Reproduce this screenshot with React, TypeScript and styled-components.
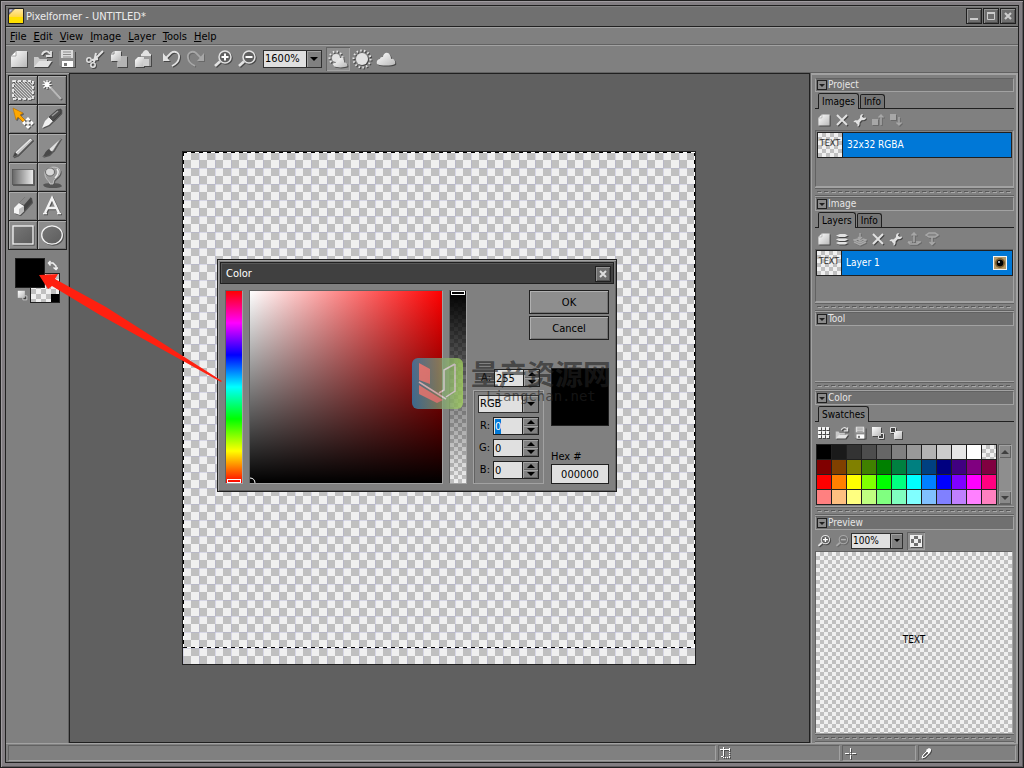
import React, { useEffect, useRef } from "react";
import styled, { createGlobalStyle, css } from "styled-components";

const c = {
  face: "#808080",
  light: "#a2a2a2",
  shade: "#626262",
  ink: "#202020",
  title: "#707070",
  work: "#606060",
  field: "#e0e0e0",
  blue: "#0078d7",
};

const font = `Tahoma, "DejaVu Sans Condensed", "DejaVu Sans", sans-serif`;

const checker = (cell: number) =>
  `repeating-conic-gradient(#c0c0c0 0 25%, #f0f0f0 0 50%) 0 0 / ${cell * 2}px ${cell * 2}px`;

const Global = createGlobalStyle`
  * { box-sizing: border-box; }
  body { margin: 0; background: ${c.ink}; font: 11px/14px ${font}; color: #000; }
  button, input, select { font: inherit; color: inherit; margin: 0; padding: 0; border: 0; border-radius: 0; background: none; outline: 0; }
  svg { display: block; flex: none; }
  ::selection { background: ${c.blue}; color: #fff; }
`;

const Frame = styled.div`
  position: relative;
  display: flex;
  min-height: 100vh;
  border: 1px solid ${c.ink};
  padding: 4px;
  background: #827e82;
  box-shadow: inset 1px 1px 0 #a09ca0, inset -1px -1px 0 #5e5a5e;
`;

const AppWindow = styled.div`
  flex: 1;
  min-width: 0;
  display: flex;
  flex-direction: column;
  border: 1px solid ${c.ink};
  background: ${c.face};
`;

const TitleBar = styled.header`
  display: flex;
  align-items: center;
  gap: 2px;
  height: 21px;
  padding: 0 2px;
  background: ${c.title};
  border-bottom: 1px solid ${c.ink};
  box-shadow: inset 0 1px 0 #848484;
  color: #ececec;
`;

const AppTitle = styled.h1`
  flex: 1;
  margin: 0;
  padding-top: 1px;
  font: inherit;
`;

const WindowButtons = styled.div`
  display: flex;
  gap: 1px;
`;

const FrameButton = styled.button`
  display: grid;
  place-items: center;
  width: 16px;
  height: 16px;
  border: 1px solid ${c.ink};
  background: #6e6e6e;
  box-shadow: inset 1px 1px 0 #929292, inset -1px -1px 0 #505050;
`;

const MenuBar = styled.nav`
  display: flex;
  gap: 7px;
  height: 18px;
  padding: 0 4px;
  border-top: 1px solid ${c.light};
  border-bottom: 1px solid ${c.shade};
`;

const MenuItem = styled.button`
  line-height: 18px;
  u { text-underline-offset: 1px; }
`;

const Toolbar = styled.div`
  display: flex;
  align-items: center;
  height: 28px;
  padding: 0 1px;
  border-top: 1px solid ${c.light};
  border-bottom: 1px solid ${c.shade};
`;

const Group = styled.div`
  display: flex;
  align-items: center;
  margin-right: 4px;
`;

const IconButton = styled.button<{ $size?: number; $on?: boolean; $off?: boolean }>`
  display: grid;
  place-items: center;
  width: ${(p) => p.$size ?? 24}px;
  height: ${(p) => p.$size ?? 24}px;
  svg {
    opacity: ${(p) => (p.$off ? 0.4 : 1)};
    filter: drop-shadow(1px 1px 0 rgba(0, 0, 0, 0.45));
  }
  ${(p) =>
    p.$on &&
    css`
      background: #8e8e8e;
      box-shadow: inset 1px 1px 0 ${c.shade}, inset -1px -1px 0 ${c.light};
    `}
`;

const ComboBox = styled.label<{ $w: number; $h: number }>`
  display: flex;
  width: ${(p) => p.$w}px;
  height: ${(p) => p.$h}px;
  border: 1px solid #303030;
  background: ${c.field};
  select {
    flex: 1;
    min-width: 0;
    padding-left: 1px;
    appearance: none;
  }
`;

const ComboArrow = styled.span<{ $w: number }>`
  display: grid;
  place-items: center;
  width: ${(p) => p.$w}px;
  border-left: 1px solid ${c.ink};
  background: ${c.face};
  box-shadow: inset 1px 1px 0 ${c.light};
`;

const Main = styled.main`
  flex: 1;
  display: flex;
  min-height: 0;
`;

const ToolPanel = styled.aside`
  display: flex;
  flex-direction: column;
  width: 64px;
  padding: 2px;
  border-right: 1px solid ${c.ink};
  box-shadow: inset 0 1px 0 ${c.light}, inset -1px 0 0 ${c.shade};
`;

const ToolGrid = styled.div`
  display: grid;
  grid-template-columns: repeat(2, 28px);
  grid-auto-rows: 28px;
  gap: 1px;
  align-self: flex-start;
  padding: 1px;
  background: ${c.ink};
`;

const ToolButton = styled.button<{ $on?: boolean }>`
  display: grid;
  place-items: center;
  background: ${(p) => (p.$on ? "#989898" : "#8c8c8c")};
  box-shadow: inset 1px 1px 0 #acacac, inset -1px -1px 0 #747474;
  svg { filter: drop-shadow(1px 1px 0 rgba(0, 0, 0, 0.4)); }
`;

const ColorPair = styled.div`
  display: grid;
  grid-template-columns: 15px 15px 15px;
  grid-template-rows: 15px 15px 15px;
  isolation: isolate;
  margin: 8px 7px;
`;

const ForeColor = styled.button`
  grid-area: 1 / 1 / 3 / 3;
  z-index: 1;
  border: 1px solid ${c.ink};
  background: #000;
`;

const BackColor = styled.button`
  grid-area: 2 / 2 / 4 / 4;
  border: 1px solid ${c.ink};
  background: linear-gradient(#000, #000) 100% 100% / 8px 8px no-repeat, ${checker(5)};
`;

const SwapSlot = styled.button`
  grid-area: 1 / 3;
  display: grid;
  place-items: center;
`;

const ResetSlot = styled.button`
  grid-area: 3 / 1;
  display: grid;
  place-items: center;
`;

const Workspace = styled.section`
  flex: 1;
  min-width: 0;
  display: grid;
  place-items: center;
  padding-right: 2px;
  border-top: 1px solid ${c.ink};
  border-bottom: 1px solid ${c.ink};
  background: ${c.work};
`;

const Canvas = styled.div`
  width: 514px;
  height: 514px;
  border: 1px solid ${c.ink};
  background: repeating-linear-gradient(90deg, rgba(170, 170, 210, 0.35) 0 1px, transparent 1px 16px),
    repeating-linear-gradient(rgba(170, 170, 210, 0.35) 0 1px, transparent 1px 16px), ${checker(8)};
`;

const antsX = "repeating-linear-gradient(90deg, #000 0 4px, #fff 4px 8px)";
const antsY = "repeating-linear-gradient(#000 0 4px, #fff 4px 8px)";

const Selection = styled.div`
  height: 496px;
  background: ${antsX} 0 0 / 100% 1px no-repeat, ${antsX} 0 100% / 100% 1px no-repeat,
    ${antsY} 0 0 / 1px 100% no-repeat, ${antsY} 100% 0 / 1px 100% no-repeat;
`;

const SidePanel = styled.aside`
  display: flex;
  flex-direction: column;
  width: 209px;
  padding: 5px 4px 0 5px;
  border-left: 1px solid ${c.ink};
  font-size: 10px;
  line-height: 12px;
  box-shadow: inset 1px 0 0 ${c.shade}, inset 3px 3px 0 -1px ${c.light}, inset -3px 0 0 -1px ${c.light},
    inset -1px 0 0 ${c.shade};
`;

const Section = styled.section<{ $h?: number }>`
  display: flex;
  flex-direction: column;
  ${(p) => (p.$h ? `height: ${p.$h}px;` : "flex: 1;")}
`;

const SectionHead = styled.h2`
  display: flex;
  align-items: center;
  gap: 1px;
  height: 14px;
  margin: 0;
  padding-left: 1px;
  border: 1px solid ${c.light};
  border-top-color: ${c.shade};
  background: ${c.title};
  color: #e6e6e6;
  font: inherit;
`;

const Fold = styled.button`
  display: grid;
  place-items: center;
  width: 10px;
  height: 10px;
  border: 1px solid ${c.ink};
  background: #8a8a8a;
`;

const Grip = styled.div`
  height: 10px;
  border-top: 1px solid ${c.light};
  border-bottom: 1px solid ${c.light};
  background: repeating-linear-gradient(90deg, #585858 0 4px, transparent 4px 7px) 2px 3px / 196px 1px no-repeat,
    repeating-linear-gradient(90deg, #a8a8a8 0 4px, transparent 4px 7px) 3px 4px / 195px 1px no-repeat;
  box-shadow: inset 0 1px 0 ${c.shade}, inset 0 -1px 0 ${c.shade};
`;

const Tabs = styled.div`
  display: flex;
  align-items: flex-end;
  gap: 1px;
  height: 17px;
  padding-left: 3px;
  border-bottom: 1px solid ${c.ink};
`;

const Tab = styled.button<{ $on?: boolean }>`
  height: ${(p) => (p.$on ? 16 : 14)}px;
  margin-bottom: ${(p) => (p.$on ? -1 : 0)}px;
  padding: 0 3px;
  border: 1px solid ${c.ink};
  border-bottom: 0;
  border-radius: 2px 3px 0 0;
  background: ${(p) => (p.$on ? c.face : "#757575")};
  line-height: 13px;
`;

const MiniBar = styled.div`
  display: flex;
  align-items: center;
  height: 21px;
`;

const ListBox = styled.div`
  flex: 1;
  border: 1px solid ${c.shade};
  border-right-color: ${c.light};
  border-bottom-color: ${c.light};
`;

const ListRow = styled.div<{ $inset?: boolean }>`
  display: flex;
  align-items: center;
  height: 26px;
  margin: ${(p) => (p.$inset ? "1px 1px 0" : "0")};
  padding-right: 5px;
  border: 1px solid ${c.ink};
  background: ${c.blue};
  color: #fff;
`;

const Thumb = styled.span`
  width: 25px;
  height: 24px;
  margin-right: 4px;
  border-right: 1px solid ${c.ink};
  background: ${checker(4)};
  color: #333;
  font-size: 9px;
  line-height: 20px;
  text-align: center;
`;

const RowName = styled.span`
  flex: 1;
`;

const EyeButton = styled.button`
  display: grid;
  place-items: center;
  width: 14px;
  height: 14px;
  border: 1px solid #f4f4f4;
  background: #b59a6a;
`;

const SwatchArea = styled.div`
  display: flex;
  padding: 1px 2px 0 1px;
`;

const SwatchGrid = styled.div`
  display: grid;
  grid-template-columns: repeat(12, 14px);
  grid-auto-rows: 14px;
  gap: 1px;
  padding: 1px;
  background: ${c.ink};
`;

const Swatch = styled.button<{ $c: string }>`
  background: ${(p) => p.$c};
`;

const Scroll = styled.div`
  display: flex;
  flex-direction: column;
  justify-content: space-between;
  width: 14px;
  margin-left: 1px;
  background: #8e8e8e;
  border: 1px solid ${c.shade};
  border-right-color: ${c.light};
`;

const ScrollButton = styled.button`
  display: grid;
  place-items: center;
  height: 13px;
  background: #8a8a8a;
  box-shadow: inset 1px 1px 0 ${c.light}, inset -1px -1px 0 ${c.shade};
`;

const PreviewArea = styled.div`
  flex: 1;
  display: grid;
  place-items: center;
  margin: 0 1px 0 0;
  padding-bottom: 5px;
  border: 1px solid ${c.shade};
  border-bottom: 0;
  border-right-color: ${c.light};
  background: ${checker(4)};
`;

const StatusBar = styled.footer`
  display: flex;
  gap: 2px;
  height: 19px;
  padding: 1px 2px;
  border-top: 1px solid ${c.light};
`;

const StatusCell = styled.div<{ $w?: number }>`
  ${(p) => (p.$w ? `width: ${p.$w}px;` : "flex: 1;")}
  padding: 1px;
  border: 1px solid ${c.shade};
  border-right-color: ${c.light};
  border-bottom-color: ${c.light};
  svg { filter: drop-shadow(1px 1px 0 rgba(0, 0, 0, 0.4)); }
`;

const Dialog = styled.div`
  position: absolute;
  left: 216px;
  top: 258px;
  width: 400px;
  padding: 2px;
  border: 1px solid ${c.ink};
  background: ${c.face};
  box-shadow: inset 1px 1px 0 ${c.light}, inset -1px -1px 0 ${c.shade};
`;

const DialogTitle = styled.div`
  display: flex;
  align-items: center;
  justify-content: space-between;
  height: 22px;
  padding: 1px 2px 0 5px;
  border: 1px solid ${c.ink};
  background: #404040;
  box-shadow: inset 1px 1px 0 #585858;
  color: #fff;
`;

const DialogBody = styled.form`
  display: flex;
  gap: 6px;
  padding: 6px 5px 5px;
`;

const sunken = css`
  border: 1px solid ${c.shade};
  border-right-color: ${c.light};
  border-bottom-color: ${c.light};
`;

const VSlider = styled.input<{ $bg: string }>`
  ${sunken}
  appearance: none;
  writing-mode: vertical-lr;
  direction: rtl;
  width: 18px;
  height: 194px;
  background: ${(p) => p.$bg};
  &::-webkit-slider-thumb {
    appearance: none;
    width: 14px;
    height: 4px;
    border: 1px solid #fff;
    background: transparent;
  }
`;

const ShadeField = styled.div`
  ${sunken}
  display: flex;
  align-items: flex-end;
  width: 194px;
  height: 194px;
  background: linear-gradient(to top, #000, transparent), linear-gradient(to right, #fff, #f00);
`;

const Controls = styled.div`
  flex: 1;
  display: flex;
  flex-direction: column;
  justify-content: space-between;
`;

const DialogButtons = styled.div`
  display: flex;
  flex-direction: column;
  align-items: flex-end;
  gap: 2px;
`;

const PushButton = styled.button`
  width: 80px;
  height: 24px;
  padding-top: 1px;
  border: 1px solid ${c.ink};
  background: #8e8e8e;
  box-shadow: inset 1px 1px 0 #b0b0b0, inset -1px -1px 0 #727272;
`;

const Values = styled.div`
  display: flex;
  justify-content: space-between;
  height: 116px;
`;

const ChannelColumn = styled.div`
  display: flex;
  flex-direction: column;
  justify-content: space-between;
  width: 71px;
`;

const ChannelBox = styled.div`
  display: flex;
  flex-direction: column;
  gap: 4px;
  padding: 4px;
  border: 1px solid ${c.light};
  box-shadow: inset 1px 1px 0 ${c.shade};
`;

const SpinRow = styled.label<{ $outer?: boolean }>`
  display: flex;
  align-items: center;
  justify-content: flex-end;
  gap: 3px;
  height: 18px;
  margin: ${(p) => (p.$outer ? "1px 4px 0 0" : "0")};
  line-height: 16px;
`;

const Spin = styled.span`
  display: flex;
  width: 46px;
  height: 18px;
  border: 1px solid ${c.ink};
  background: ${c.field};
  input {
    flex: 1;
    min-width: 0;
    padding: 1px 0 0 1px;
  }
`;

const SpinButtons = styled.span`
  display: grid;
  grid-template-rows: 1fr 1fr;
  width: 16px;
  border-left: 1px solid ${c.ink};
  button {
    display: grid;
    place-items: center;
    background: ${c.face};
    box-shadow: inset 1px 1px 0 ${c.light}, inset -1px -1px 0 ${c.shade};
  }
`;

const ResultColumn = styled.div`
  display: flex;
  flex-direction: column;
  justify-content: space-between;
  width: 58px;
`;

const ResultColor = styled.div`
  height: 58px;
  border: 1px solid ${c.ink};
  background: #000;
`;

const HexField = styled.label`
  display: flex;
  flex-direction: column;
  input {
    width: 100%;
    height: 20px;
    border: 1px solid ${c.ink};
    background: ${c.field};
    text-align: center;
  }
`;

const Watermark = styled.div`
  position: absolute;
  left: 411px;
  top: 357px;
  display: flex;
  gap: 8px;
  color: rgba(32, 32, 32, 0.62);
  pointer-events: none;
`;

const MarkText = styled.div`
  font: 700 28px/31px "Noto Sans CJK SC", sans-serif;
  text-align: center;
  small {
    display: block;
    font: 14px/14px "DejaVu Sans Mono", monospace;
  }
`;

const ArrowLayer = styled.svg`
  position: absolute;
  left: 33px;
  top: 263px;
  pointer-events: none;
`;

/* ---------- drawings ---------- */

const L = "#e2e2e2";

const Down = ({ s = 4, fill = "#000" }: { s?: number; fill?: string }) => (
  <svg width={s * 2} height={s} viewBox={`0 0 ${s * 2} ${s}`}><path d={`M0 0H${s * 2}L${s} ${s}Z`} fill={fill} /></svg>
);
const Up = ({ s = 4, fill = "#000" }: { s?: number; fill?: string }) => (
  <svg width={s * 2} height={s} viewBox={`0 0 ${s * 2} ${s}`}><path d={`M0 ${s}H${s * 2}L${s} 0Z`} fill={fill} /></svg>
);

const Svg = ({ s = 20, v = 20, children }: { s?: number; v?: number; children: React.ReactNode }) => (
  <svg width={s} height={s} viewBox={`0 0 ${v} ${v}`} fill="none">{children}</svg>
);

const DefsSvg = styled.svg`
  position: absolute;
`;

const Defs = () => (
  <DefsSvg width="0" height="0" aria-hidden="true">
    <defs>
      <linearGradient id="paper" x1="0" y1="0" x2="1" y2="1"><stop offset="0" stopColor="#fff" /><stop offset="1" stopColor="#b8b8b8" /></linearGradient>
      <linearGradient id="fade"><stop offset="0" stopColor="#666" /><stop offset="1" stopColor="#eee" /></linearGradient>
      <linearGradient id="dim" x1="0" y1="0" x2="1" y2="1"><stop offset="0" stopColor="#777" /><stop offset="1" stopColor="#5c5c5c" /></linearGradient>
      <linearGradient id="gold" x1="0" y1="0" x2="0" y2="1"><stop offset="0" stopColor="#ffe9a8" /><stop offset="1" stopColor="#ffc800" /></linearGradient>
      <linearGradient id="mark"><stop offset="0" stopColor="#2f86b8" /><stop offset=".5" stopColor="#7a9a78" /><stop offset="1" stopColor="#a5d65c" /></linearGradient>
      <pattern id="hatch" width="3" height="3" patternUnits="userSpaceOnUse"><path d="M0 0L3 3" stroke="#d0d0d0" /></pattern>
    </defs>
  </DefsSvg>
);

const Page = ({ s = 20 }: { s?: number }) => <Svg s={s}><path d="M7 2H18V18H2V7Z" fill="url(#paper)" /><path d="M7 2V7H2Z" fill="#fff" stroke="#909090" strokeWidth=".8" /></Svg>;
const Open = ({ s = 20 }: { s?: number }) => (
  <Svg s={s}><path d="M1 18V8H5L7 10H14V12H7L2 18Z" fill="#c8c8c8" /><path d="M6 12H19L15 18H1Z" fill={L} /><path d="M9 6C10 2 15 1 17 5M18 2V7H13" stroke={L} strokeWidth="1.8" /></Svg>
);
const Save = ({ s = 20 }: { s?: number }) => (
  <Svg s={s}><path d="M2 2H18V18H4L2 16Z" fill="#8c8c8c" /><path d="M4 1H16V9H4Z" fill="#dcdcdc" /><path d="M6 3H14M6 5.500H14M6 8H14" stroke="#8a8a8a" /><path d="M5 12H16V18H5Z" fill="#fff" /><path d="M7 14H10V17H7Z" fill="#777" /></Svg>
);
const Cut = () => <Svg><path d="M18 2L8 12M13 10L7 11M11 4L9 13" stroke={L} strokeWidth="2" /><circle cx="4" cy="11" r="2.200" stroke={L} strokeWidth="1.500" /><circle cx="8" cy="16" r="2.200" stroke={L} strokeWidth="1.500" /></Svg>;
const Copy = () => <Svg><path d="M10 7H18V18H8V14Z" fill="#b4b4b4" /><path d="M5 2H12V12H2V5Z" fill="url(#paper)" /><path d="M5 2V5H2" stroke="#888" /></Svg>;
const Paste = () => <Svg><path d="M8 5H18V17H8Z" fill="#9a9a9a" /><path d="M8 5C10 5 10 1 13 1S16 5 18 5V7H8Z" fill={L} /><path d="M5 8H11V18H2V11Z" fill="url(#paper)" /><path d="M10 10H16V17H10Z" fill="#d0d0d0" /></Svg>;
const Undo = () => <Svg><path d="M4 10L10 4C14 1 19 4 18 9C17.500 13 15 15 11 17" stroke={L} strokeWidth="1.800" /><path d="M2 4V12H9Z" fill={L} /></Svg>;
const Redo = () => <Svg><path d="M17 10L11 4C7 1 2 4 3 9C3.500 13 6 15 10 17" stroke={L} strokeWidth="1.800" /><path d="M19 4V12H12Z" fill={L} /></Svg>;
const Zoom = ({ s = 20, plus }: { s?: number; plus?: boolean }) => (
  <Svg s={s}><path d="M2 17L7 12.500" stroke={L} strokeWidth="2.600" /><circle cx="12" cy="8" r="6" fill="#606060" stroke={L} strokeWidth="1.500" /><path d={plus ? "M8.500 8H15.500M12 4.500V11.500" : "M8.500 8H15.500"} stroke="#fff" strokeWidth="2" /></Svg>
);
const Sun = ({ x = 10, y = 10, r = 6 }: { x?: number; y?: number; r?: number }) => (
  <g><circle cx={x} cy={y} r={r} fill={L} /><circle cx={x} cy={y} r={r + 2.5} stroke={L} strokeWidth="2" strokeDasharray="1.500 2.300" /></g>
);
const Cloud = () => <path d="M1 15C0 12 2 10 4 10C4 8 6 8 7 8C7 4 12 2 14 6C15 8 15 9 15 10C18 9 20 13 19 15C15 17 5 17 1 15Z" fill="url(#paper)" />;
const Cross = () => <Svg s={14} v={14}><path d="M2 2L12 12M12 2L2 12" stroke={L} strokeWidth="2" /></Svg>;
const Wrench = () => <Svg s={14} v={14}><path d="M3.500 10.500L9 5" stroke={L} strokeWidth="2.600" /><path d="M10 1C7 1 6.500 4 7.500 6.500C10 8 13 7 13 4.500L10.500 5L9 3.500ZM0.500 9L3 9.500L4.500 11L4.500 13.500C7 13 7 10 6 8C4 7 1 7 .5 9Z" fill={L} /></Svg>;
const MoveImg = ({ up }: { up?: boolean }) => (
  <Svg s={14} v={14}>{up ? <><path d="M1 6H7V12H1Z" fill={L} /><path d="M10 12V2M7.500 4.500L10 2L12.500 4.500" stroke={L} strokeWidth="1.500" /></> : <><path d="M1 1H7V7H1Z" fill={L} /><path d="M10 4V12M7.500 9.500L10 12L12.500 9.500" stroke={L} strokeWidth="1.500" /></>}</Svg>
);
const Stack = () => <Svg s={14} v={14}><path d="M1 3.500L5 2H10L13 3.500L10 5H4ZM1 7.500L3 6.500H11L13 7.500L10 9H4ZM1 11L3 10H11L13 11L10 12.500H4Z" fill={L} /></Svg>;
const LayerMove = ({ k }: { k: "merge" | "up" | "down" }) => (
  <Svg s={14} v={14}>
    {k === "merge" && <path d="M7 1V7M5 5L7 7L9 5M1 8L5 7L7 9L10 7L13 8L7 11ZM1 10L7 13L13 10" stroke={L} strokeWidth="1.400" />}
    {k === "up" && <path d="M7 10V1M4.500 3.500L7 1L9.500 3.500M1 10H5M9 10H13L10 12H3L1 10" stroke={L} strokeWidth="1.500" />}
    {k === "down" && <path d="M1 3L4 1H10L13 3L10 5H4ZM7 5V12M4.500 10L7 12.500L9.500 10" stroke={L} strokeWidth="1.500" fill={L} fillOpacity=".4" />}
  </Svg>
);
const GridDots = () => <Svg s={14} v={14}><path d="M1 1H4V4H1ZM5 1H8V4H5ZM9 1H12V4H9ZM1 5H4V8H1ZM5 5H8V8H5ZM9 5H12V8H9ZM1 9H4V12H1ZM5 9H8V12H5ZM9 9H12V12H9Z" fill="#f4f4f4" /></Svg>;
const Overlap = ({ back, s = 14 }: { back?: boolean; s?: number }) => (
  <Svg s={s} v={14}>{back ? <><path d="M5 5H13V13H5Z" fill="url(#paper)" /><path d="M1.500 1.500H6.500V6.500H1.500Z" fill="#444" stroke={L} /></> : <><path d="M7.500 7.500H12.500V12.500H7.500Z" fill="#444" stroke={L} /><path d="M1 1H10V10H1Z" fill="url(#paper)" /></>}</Svg>
);

const toolIcons: { name: string; art: React.ReactNode }[] = [
  { name: "Select", art: <><rect x="2" y="3" width="20" height="18" fill="url(#hatch)" /><rect x="2" y="3" width="20" height="18" stroke="#fff" strokeWidth="1.500" strokeDasharray="3 2" /></> },
  { name: "Magic wand", art: <><path d="M10 9L21 21" stroke="#b8b8b8" strokeWidth="2.500" /><path d="M7 2V11M2.500 6.500H11.500M3.500 3L10.500 10M10.500 3L3.500 10" stroke="#f4f4f4" strokeWidth="1.200" /><circle cx="7" cy="6.500" r="2.500" fill="#fff" /></> },
  { name: "Move", art: <><path d="M2 1L12 6L9 8L14 13L12 15L7 10L5 13Z" fill="#ffa800" stroke="#b87000" strokeWidth=".6" /><path d="M17 11V21M12 16H22M15 13L17 11L19 13M15 19L17 21L19 19M14 14L12 16L14 18M20 14L22 16L20 18" stroke="#fff" strokeWidth="1.300" /></> },
  { name: "Pick color", art: <><path d="M2 21L5 14L9 10L13 14L9 18Z" fill="#f0f0f0" /><path d="M9 10L17 3L21 2L21 6L13 14Z" fill="#4c4c4c" stroke="#333" strokeWidth=".6" /><path d="M12 9L18 4" stroke="#999" strokeWidth="1.500" /></> },
  { name: "Pencil", art: <><path d="M2 21L4 16L19 2L22 4L7 19Z" fill="#c4c4c4" stroke="#666" strokeWidth=".6" /><path d="M5 17L20 3" stroke="#f4f4f4" /><path d="M2 21L4 16L7 19Z" fill="#444" /></> },
  { name: "Brush", art: <><path d="M9 13L21 2L13 15L10 16Z" fill="#e0e0e0" stroke="#777" strokeWidth=".6" /><path d="M9 13L12 16L9 19L2 21C5 19 4 16 9 13Z" fill="#484848" /></> },
  { name: "Gradient", art: <rect x="1.500" y="4.500" width="21" height="15" fill="url(#fade)" stroke="#555" strokeWidth=".8" /> },
  { name: "Fill", art: <><ellipse cx="12" cy="20" rx="9" ry="2" fill="#555" /><path d="M5 7C6 2 17 0 20 5C21 9 18 12 14 15L13 19H10C10 16 4 14 5 7Z" fill="#9a9a9a" stroke="#d0d0d0" strokeWidth=".8" /><ellipse cx="10" cy="7" rx="4.500" ry="4" fill="#d8d8d8" stroke="#555" strokeWidth=".8" /><path d="M17 4C20 8 17 11 15 13" stroke="#eee" strokeWidth="1.500" /></> },
  { name: "Eraser", art: <><path d="M8 9L14 3L20 3L21 8L13 17L8 13Z" fill="#444" /><path d="M14 3L20 3L13 11L8 9Z" fill="#8a8a8a" /><path d="M3 14L8 9L13 12V17L9 21L3 19Z" fill="#f4f4f4" /><path d="M8 15V21L13 17V12Z" fill="#bbb" /></> },
  { name: "Type", art: <><path d="M5 19L12 4L19 19M8 14H16" stroke="#f4f4f4" strokeWidth="2.400" /><path d="M3 19.500H7M17 19.500H21" stroke="#f4f4f4" strokeWidth="1.500" /></> },
  { name: "Rectangle", art: <rect x="2" y="3" width="20" height="18" fill="url(#dim)" stroke="#f4f4f4" strokeWidth="1.300" /> },
  { name: "Ellipse", art: <ellipse cx="12" cy="12" rx="10.300" ry="9.200" fill="url(#dim)" stroke="#f4f4f4" strokeWidth="1.300" /> },
];

const palette = [
  "#000", "#1a1a1a", "#333", "#4d4d4d", "#666", "#808080", "#999", "#b3b3b3", "#ccc", "#e6e6e6", "#fff", checker(4),
  "#800000", "#804000", "#808000", "#408000", "#008000", "#008040", "#008080", "#004080", "#000080", "#400080", "#800080", "#800040",
  "#f00", "#ff8000", "#ff0", "#80ff00", "#0f0", "#00ff80", "#0ff", "#0080ff", "#00f", "#8000ff", "#f0f", "#ff0080",
  "#ff8080", "#ffc080", "#ffff80", "#c0ff80", "#80ff80", "#80ffc0", "#80ffff", "#80c0ff", "#8080ff", "#c080ff", "#ff80ff", "#ff80c0",
];

/* ---------- parts ---------- */

const Head = ({ children }: { children: string }) => (
  <SectionHead><Fold type="button" aria-label={`Fold ${children}`}><Down s={3} fill={c.ink} /></Fold>{children}</SectionHead>
);

const Combo = ({ label, value, w, h, aw = 15 }: { label: string; value: string; w: number; h: number; aw?: number }) => (
  <ComboBox $w={w} $h={h}>
    <select aria-label={label} defaultValue={value}><option>{value}</option></select>
    <ComboArrow $w={aw}><Down s={aw > 12 ? 4 : 3} /></ComboArrow>
  </ComboBox>
);

const Channel = ({ name, value, outer, inputRef }: { name: string; value: string; outer?: boolean; inputRef?: React.Ref<HTMLInputElement> }) => (
  <SpinRow $outer={outer}>
    {name}:
    <Spin>
      <input ref={inputRef} defaultValue={value} />
      <SpinButtons>
        <button type="button" aria-label={`Raise ${name}`}><Up /></button>
        <button type="button" aria-label={`Lower ${name}`}><Down /></button>
      </SpinButtons>
    </Spin>
  </SpinRow>
);

const ColorDialog = () => {
  const red = useRef<HTMLInputElement>(null);
  useEffect(() => {
    red.current?.focus();
    red.current?.select();
  }, []);
  return (
    <Dialog role="dialog" aria-label="Color">
      <DialogTitle>
        Color
        <FrameButton type="button" aria-label="Close dialog"><Svg s={8} v={8}><path d="M1 1L7 7M7 1L1 7" stroke="#ddd" strokeWidth="2" /></Svg></FrameButton>
      </DialogTitle>
      <DialogBody onSubmit={(e) => e.preventDefault()}>
        <VSlider type="range" aria-label="Hue" min={0} max={360} defaultValue={0} $bg="linear-gradient(#f00, #f0f, #00f, #0ff, #0f0, #ff0, #f00)" />
        <ShadeField><Svg s={6} v={6}><path d="M0 1C3 1 5 3 5 6" stroke="#fff" /></Svg></ShadeField>
        <VSlider type="range" aria-label="Alpha" min={0} max={255} defaultValue={255} $bg={`linear-gradient(#000, transparent), ${checker(4)}`} />
        <Controls>
          <DialogButtons>
            <PushButton type="submit">OK</PushButton>
            <PushButton type="button">Cancel</PushButton>
          </DialogButtons>
          <Values>
            <ChannelColumn>
              <Channel name="A" value="255" outer />
              <ChannelBox>
                <Combo label="Color model" value="RGB" w={61} h={18} aw={16} />
                <Channel name="R" value="0" inputRef={red} />
                <Channel name="G" value="0" />
                <Channel name="B" value="0" />
              </ChannelBox>
            </ChannelColumn>
            <ResultColumn>
              <ResultColor />
              <HexField>Hex #<input defaultValue="000000" /></HexField>
            </ResultColumn>
          </Values>
        </Controls>
      </DialogBody>
    </Dialog>
  );
};

export default function App() {
  return (
    <Frame>
      <Global />
      <Defs />
      <AppWindow>
        <TitleBar>
          <Svg s={16} v={16}><path d="M.5 .5H15.500V15.500H.5Z" fill="url(#gold)" stroke={c.ink} /><path d="M1 9H15V15H1Z" fill="#ffe000" /><path d="M1 1H6V2H4V4H2V6H1Z" fill="#c8c8e8" stroke="#334" strokeWidth=".6" /></Svg>
          <AppTitle>Pixelformer - UNTITLED*</AppTitle>
          <WindowButtons>
            <FrameButton aria-label="Minimize"><Svg s={10} v={10}><path d="M1 8H9" stroke="#ccc" strokeWidth="2" /></Svg></FrameButton>
            <FrameButton aria-label="Maximize"><Svg s={10} v={10}><path d="M1 2H9" stroke="#ccc" strokeWidth="2" /><path d="M1.500 1V8.500H8.500V1" stroke="#ccc" /></Svg></FrameButton>
            <FrameButton aria-label="Close"><Svg s={10} v={10}><path d="M2 2L8 8M8 2L2 8" stroke="#ccc" strokeWidth="2.200" /></Svg></FrameButton>
          </WindowButtons>
        </TitleBar>
        <MenuBar>
          {["File", "Edit", "View", "Image", "Layer", "Tools", "Help"].map((m) => (
            <MenuItem key={m}><u>{m[0]}</u>{m.slice(1)}</MenuItem>
          ))}
        </MenuBar>
        <Toolbar>
          <Group>
            <IconButton aria-label="New"><Page /></IconButton>
            <IconButton aria-label="Open"><Open /></IconButton>
            <IconButton aria-label="Save"><Save /></IconButton>
          </Group>
          <Group>
            <IconButton aria-label="Cut"><Cut /></IconButton>
            <IconButton aria-label="Copy"><Copy /></IconButton>
            <IconButton aria-label="Paste"><Paste /></IconButton>
          </Group>
          <Group>
            <IconButton aria-label="Undo"><Undo /></IconButton>
            <IconButton aria-label="Redo" $off><Redo /></IconButton>
          </Group>
          <Group>
            <IconButton aria-label="Zoom in"><Zoom plus /></IconButton>
            <IconButton aria-label="Zoom out"><Zoom /></IconButton>
          </Group>
          <Group><Combo label="Zoom" value="1600%" w={59} h={18} /></Group>
          <IconButton aria-label="Sun and cloud" $on><Svg><Sun x={8} y={9} r={4} /><g transform="translate(5 6) scale(.75)"><Cloud /></g></Svg></IconButton>
          <IconButton aria-label="Sun"><Svg><Sun /></Svg></IconButton>
          <IconButton aria-label="Cloud"><Svg><Cloud /></Svg></IconButton>
        </Toolbar>
        <Main>
          <ToolPanel>
            <ToolGrid>
              {toolIcons.map((t, i) => (
                <ToolButton key={t.name} aria-label={t.name} $on={i === 2}><Svg s={24} v={24}>{t.art}</Svg></ToolButton>
              ))}
            </ToolGrid>
            <ColorPair>
              <ForeColor aria-label="Foreground color" />
              <BackColor aria-label="Background color" />
              <SwapSlot aria-label="Swap colors"><Svg s={11} v={11}><path d="M2 3H6L9 6V9M3.500 1L1.500 3L3.500 5.500M6.500 7.500L9 9.500L11 7.500" stroke="#f0f0f0" strokeWidth="1.500" /></Svg></SwapSlot>
              <ResetSlot aria-label="Reset colors"><Overlap s={11} /></ResetSlot>
            </ColorPair>
          </ToolPanel>
          <Workspace><Canvas><Selection /></Canvas></Workspace>
          <SidePanel>
            <Section $h={109}>
              <Head>Project</Head>
              <Tabs><Tab $on>Images</Tab><Tab>Info</Tab></Tabs>
              <MiniBar>
                <IconButton $size={18} aria-label="New image"><Page s={14} /></IconButton>
                <IconButton $size={18} aria-label="Delete image"><Cross /></IconButton>
                <IconButton $size={18} aria-label="Image properties"><Wrench /></IconButton>
                <IconButton $size={18} $off aria-label="Image up"><MoveImg up /></IconButton>
                <IconButton $size={18} $off aria-label="Image down"><MoveImg /></IconButton>
              </MiniBar>
              <ListBox><ListRow $inset><Thumb>TEXT</Thumb><RowName>32x32 RGBA</RowName></ListRow></ListBox>
            </Section>
            <Grip />
            <Section $h={105}>
              <Head>Image</Head>
              <Tabs><Tab $on>Layers</Tab><Tab>Info</Tab></Tabs>
              <MiniBar>
                <IconButton $size={18} aria-label="New layer"><Page s={14} /></IconButton>
                <IconButton $size={18} aria-label="Duplicate layer"><Stack /></IconButton>
                <IconButton $size={18} $off aria-label="Merge layer"><LayerMove k="merge" /></IconButton>
                <IconButton $size={18} aria-label="Delete layer"><Cross /></IconButton>
                <IconButton $size={18} aria-label="Layer properties"><Wrench /></IconButton>
                <IconButton $size={18} $off aria-label="Layer up"><LayerMove k="up" /></IconButton>
                <IconButton $size={18} $off aria-label="Layer down"><LayerMove k="down" /></IconButton>
              </MiniBar>
              <ListBox>
                <ListRow>
                  <Thumb>TEXT</Thumb><RowName>Layer 1</RowName>
                  <EyeButton aria-label="Toggle layer"><Svg s={12} v={12}><circle cx="6" cy="6" r="5" fill="#7a5c30" /><circle cx="6" cy="6" r="3.300" fill="#000" /><circle cx="5" cy="5" r="1" fill="#cde" /></Svg></EyeButton>
                </ListRow>
              </ListBox>
            </Section>
            <Grip />
            <Section $h={69}><Head>Tool</Head></Section>
            <Grip />
            <Section $h={115}>
              <Head>Color</Head>
              <Tabs><Tab $on>Swatches</Tab></Tabs>
              <MiniBar>
                <IconButton $size={18} aria-label="Palette grid"><GridDots /></IconButton>
                <IconButton $size={18} aria-label="Load palette"><Open s={14} /></IconButton>
                <IconButton $size={18} aria-label="Save palette"><Save s={14} /></IconButton>
                <IconButton $size={18} aria-label="Set foreground"><Overlap /></IconButton>
                <IconButton $size={18} aria-label="Set background"><Overlap back /></IconButton>
              </MiniBar>
              <SwatchArea>
                <SwatchGrid>{palette.map((p, i) => <Swatch key={i} $c={p} aria-label={`Swatch ${i + 1}`} />)}</SwatchGrid>
                <Scroll>
                  <ScrollButton aria-label="Scroll up"><Up fill="#404040" /></ScrollButton>
                  <ScrollButton aria-label="Scroll down"><Down fill="#404040" /></ScrollButton>
                </Scroll>
              </SwatchArea>
            </Section>
            <Grip />
            <Section>
              <Head>Preview</Head>
              <MiniBar>
                <IconButton $size={18} aria-label="Preview zoom in"><Zoom s={14} plus /></IconButton>
                <IconButton $size={18} $off aria-label="Preview zoom out"><Zoom s={14} /></IconButton>
                <Group><Combo label="Preview zoom" value="100%" w={52} h={16} aw={12} /></Group>
                <IconButton $size={18} $on aria-label="Checkerboard"><Svg s={12} v={12}><path d="M0 0H12V12H0Z" fill="#f0f0f0" /><path d="M4 1H8V4H4ZM1 4H4V8H1ZM8 4H11V8H8ZM4 8H8V11H4Z" fill="#707070" /></Svg></IconButton>
              </MiniBar>
              <PreviewArea>TEXT</PreviewArea>
            </Section>
            <Grip />
          </SidePanel>
        </Main>
        <StatusBar>
          <StatusCell />
          <StatusCell $w={122}><Svg s={12} v={12}><path d="M3.500 0V9M0 2.500H10M1 9.500H3" stroke="#fff" /><path d="M9.500 1V11M3 10.500H11" stroke="#fff" strokeDasharray="1 1" /></Svg></StatusCell>
          <StatusCell $w={74}><Svg s={12} v={12}><path d="M6.500 1V5M6.500 8V12M1 6.500H5M8 6.500H12M6 6.500H7" stroke="#fff" /></Svg></StatusCell>
          <StatusCell $w={98}><Svg s={12} v={12}><path d="M2 11L3 8L7 4L9 6L5 10Z" stroke="#fff" /><path d="M6 3L9 1L11 2L11 4L9 7Z" fill="#fff" /></Svg></StatusCell>
        </StatusBar>
      </AppWindow>
      <ColorDialog />
      <Watermark>
        <svg width="51" height="51" viewBox="0 0 51 51" opacity=".75">
          <rect width="51" height="51" rx="6" fill="url(#mark)" />
          <path d="M7 5L18 11V26L7 22ZM7 27L31 42L25 45L7 36Z" fill="#f0958f" />
          <path d="M7 24L34 41M43 6V33L34 39M43 6L32 12V32L27 35" stroke="#eddde0" strokeWidth="1.500" fill="none" />
        </svg>
        <MarkText>量产资源网<small>Liangchan.net</small></MarkText>
      </Watermark>
      <ArrowLayer width="192" height="122" viewBox="0 0 192 122">
        <path d="M5 11L24 10L21 15L72 43L188 117L187 118L66 51L18 22L14 25Z" fill="#ff2010" />
      </ArrowLayer>
    </Frame>
  );
}
